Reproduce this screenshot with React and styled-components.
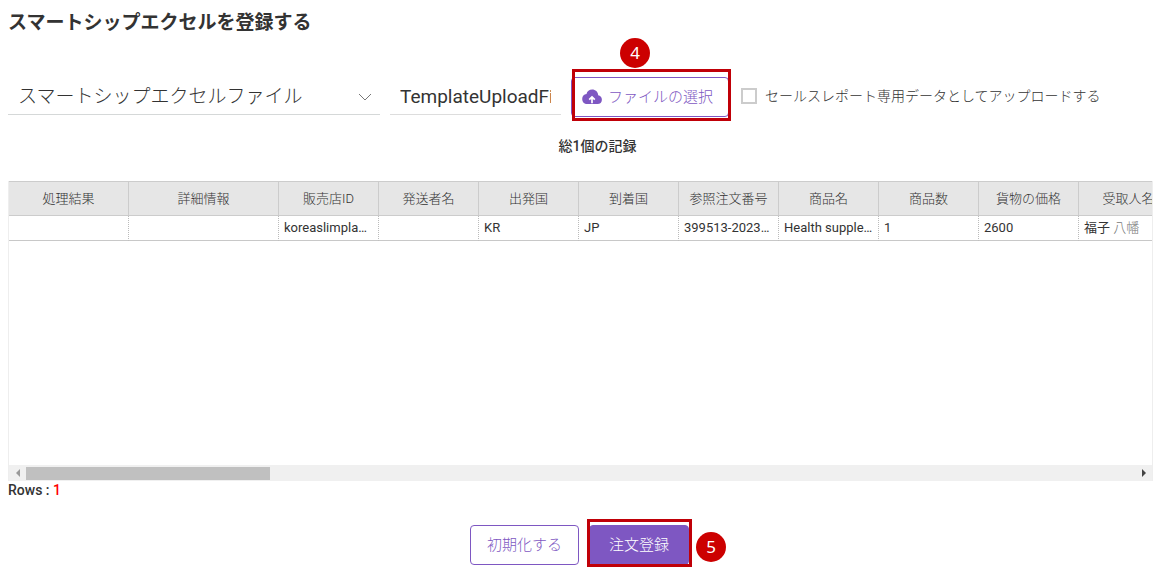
import styled, { createGlobalStyle } from 'styled-components';
import { useState } from 'react';

const columns = [
  { name: '処理結果', width: 120, value: '' },
  { name: '詳細情報', width: 150, value: '' },
  { name: '販売店ID', width: 100, value: 'koreaslimplanet' },
  { name: '発送者名', width: 100, value: '' },
  { name: '出発国', width: 100, value: 'KR' },
  { name: '到着国', width: 100, value: 'JP' },
  { name: '参照注文番号', width: 100, value: '399513-20230412' },
  { name: '商品名', width: 100, value: 'Health supplement' },
  { name: '商品数', width: 100, value: '1' },
  { name: '貨物の価格', width: 100, value: '2600' },
  { name: '受取人名', width: 100, value: '福子 ', muted: '八幡' },
];

const App = () => {
  const [fileName, setFileName] = useState('TemplateUploadFile.xlsx');
  const [reportOnly, setReportOnly] = useState(false);

  return (
    <Page>
      <GlobalStyle />
      <Title>スマートシップエクセルを登録する</Title>
      <Toolbar>
        <SelectBox>
          <TypeSelect aria-label="ファイルの種類">
            <option>スマートシップエクセルファイル</option>
          </TypeSelect>
          <Chevron viewBox="0 0 14 8" aria-hidden="true">
            <path d="M1 1l6 6 6-6" fill="none" stroke="#777" />
          </Chevron>
        </SelectBox>
        <FileNameBox>
          <FileName
            type="text"
            aria-label="ファイル名"
            value={fileName}
            onChange={(e) => setFileName(e.target.value)}
          />
        </FileNameBox>
        <FileStep>
          <FileButton type="button">
            <CloudIcon viewBox="0 0 20 16" aria-hidden="true">
              <path
                d="M16.2 6.3C16.1 2.8 13.4.5 10.2.5 7.3.5 5.1 2.2 4.5 4.9 1.9 5.2.2 7.2.2 9.9c0 3 2.1 5.200 5 5.200h10.300c2.600 0 4.400-1.900 4.400-4.400 0-2.200-1.500-4-3.700-4.400z"
                fill="#7e57c2"
              />
              <path
                d="M10 14.2V8.500M7.200 10.700L10 7.900l2.800 2.800"
                fill="none"
                stroke="#fff"
                strokeWidth="1.7"
              />
            </CloudIcon>
            <ButtonText>ファイルの選択</ButtonText>
          </FileButton>
          <FileFrame />
          <TopBadge>4</TopBadge>
        </FileStep>
        <CheckLabel>
          <CheckBox
            type="checkbox"
            checked={reportOnly}
            onChange={(e) => setReportOnly(e.target.checked)}
          />
          <CheckText>
            セールスレポート専用データとしてアップロードする
          </CheckText>
        </CheckLabel>
      </Toolbar>
      <RecordCount>総1個の記録</RecordCount>
      <Grid>
        <GridBody>
          <Table>
            <colgroup>
              {columns.map((column) => (
                <Col key={column.name} $width={column.width} />
              ))}
            </colgroup>
            <thead>
              <tr>
                {columns.map((column) => (
                  <HeadCell key={column.name}>{column.name}</HeadCell>
                ))}
              </tr>
            </thead>
            <tbody>
              <tr>
                {columns.map((column) => (
                  <Cell key={column.name}>
                    {column.value}
                    {column.muted && <Muted>{column.muted}</Muted>}
                  </Cell>
                ))}
              </tr>
            </tbody>
          </Table>
        </GridBody>
        <ScrollBar>
          <ScrollButton type="button" aria-label="左へ">
            <Arrow viewBox="0 0 4 8">
              <path d="M4 0v8L0 4z" fill="#999" />
            </Arrow>
          </ScrollButton>
          <Track>
            <Thumb />
          </Track>
          <ScrollButton type="button" aria-label="右へ">
            <Arrow viewBox="0 0 4 8">
              <path d="M0 0v8l4-4z" fill="#444" />
            </Arrow>
          </ScrollButton>
        </ScrollBar>
      </Grid>
      <Rows>
        Rows : <RowTotal>1</RowTotal>
      </Rows>
      <Actions>
        <ResetButton type="button">
          <ButtonText>初期化する</ButtonText>
        </ResetButton>
        <SubmitStep>
          <SubmitButton type="button">
            <ButtonText>注文登録</ButtonText>
          </SubmitButton>
          <SubmitFrame />
          <SideBadge>5</SideBadge>
        </SubmitStep>
      </Actions>
    </Page>
  );
};

export default App;

const GlobalStyle = createGlobalStyle`
  * {
    box-sizing: border-box;
  }
  body {
    margin: 0;
    background: #fff;
    color: #333;
    font-family: Roboto, 'Noto Sans CJK JP', sans-serif;
  }
  button, input, select {
    font-family: inherit;
  }
`;

const Page = styled.main`
  padding: 0 6px 5px 8px;
`;

const Title = styled.h1`
  margin: 0;
  padding-top: 2px;
  font-size: 19px;
  font-weight: 700;
  line-height: 42px;
`;

const Toolbar = styled.div`
  display: flex;
  align-items: flex-start;
  gap: 10px;
  padding-top: 33px;
`;

const SelectBox = styled.div`
  position: relative;
  flex: 0 1 372px;
`;

const TypeSelect = styled.select`
  width: 100%;
  height: 38px;
  padding: 2px 30px 0 10px;
  border: none;
  border-bottom: 1px solid #d5d8d8;
  border-radius: 0;
  background: none;
  color: #333;
  font-size: 19px;
  font-weight: 300;
  appearance: none;
`;

const Chevron = styled.svg`
  position: absolute;
  top: 16px;
  right: 8px;
  width: 14px;
  height: 8px;
  pointer-events: none;
`;

const FileNameBox = styled.div`
  flex: 0 1 171px;
  height: 38px;
  padding: 0 10px;
  border-bottom: 1px solid #ddd;
`;

const FileName = styled.input`
  width: 100%;
  height: 37px;
  padding: 2px 0 0;
  border: none;
  outline: none;
  background: none;
  color: #333;
  font-size: 19px;
`;

const FileStep = styled.div`
  position: relative;
`;

const Button = styled.button`
  height: 40px;
  border: 1px solid #7e57c2;
  border-radius: 4px;
  background: #fff;
  color: #7e57c2;
  font-size: 15px;
  font-weight: 300;
  white-space: nowrap;
  cursor: pointer;
`;

const ButtonText = styled.span`
  display: block;
  padding-bottom: 3px;
`;

const FileButton = styled(Button)`
  display: flex;
  align-items: center;
  gap: 6px;
  padding: 0 15px 0 10px;
`;

const CloudIcon = styled.svg`
  width: 20px;
  height: 16px;
`;

const Frame = styled.span`
  position: absolute;
  border: 3px solid #c00008;
  pointer-events: none;
`;

const FileFrame = styled(Frame)`
  inset: -8px -2px -4px 1px;
`;

const Badge = styled.span`
  position: absolute;
  width: 30px;
  height: 30px;
  border-radius: 50%;
  background: #c00;
  color: #fff;
  font-family: 'Noto Sans', sans-serif;
  font-size: 17px;
  line-height: 30px;
  text-align: center;
`;

const TopBadge = styled(Badge)`
  top: -39px;
  left: 49px;
`;

const CheckLabel = styled.label`
  display: flex;
  align-items: center;
  gap: 8px;
  height: 38px;
  padding-left: 2px;
  font-size: 14px;
  font-weight: 300;
  white-space: nowrap;
`;

const CheckText = styled.span`
  padding-bottom: 2px;
`;

const CheckBox = styled.input`
  width: 16px;
  height: 16px;
  margin: 0;
  border: 2px solid #ccc;
  background: #fff;
  appearance: none;
  &:checked {
    background: #7e57c2;
  }
`;

const RecordCount = styled.p`
  margin: 18px 0 0;
  padding-left: 34px;
  font-size: 14px;
  font-weight: 500;
  line-height: 22px;
  text-align: center;
`;

const Grid = styled.section`
  display: flex;
  flex-direction: column;
  height: 300px;
  margin-top: 24px;
  border: 1px solid #eee;
  border-top: none;
  border-bottom: none;
`;

const GridBody = styled.div`
  flex: 1;
  overflow: hidden;
`;

const Table = styled.table`
  width: 1170px;
  border-collapse: separate;
  border-spacing: 0;
  table-layout: fixed;
`;

const Col = styled.col`
  width: ${(props) => props.$width}px;
`;

const HeadCell = styled.th`
  height: 35px;
  padding: 0 0 2px;
  border-top: 1px solid #ccc;
  border-right: 1px solid #ccc;
  border-bottom: 1px solid #ccc;
  background: #e6e6e6;
  font-size: 13px;
  font-weight: 300;
`;

const Cell = styled.td`
  height: 25px;
  padding: 0 5px;
  overflow: hidden;
  border-right: 1px dotted #bbb;
  border-bottom: 1px solid #c8c8c8;
  font-size: 13px;
  line-height: 24px;
  text-overflow: ellipsis;
  white-space: nowrap;
`;

const Muted = styled.span`
  color: #777;
  font-weight: 300;
`;

const ScrollBar = styled.div`
  display: flex;
  height: 16px;
  background: #f0f0f0;
`;

const ScrollButton = styled.button`
  display: flex;
  align-items: center;
  justify-content: center;
  width: 17px;
  height: 16px;
  padding: 0;
  border: none;
  background: none;
`;

const Arrow = styled.svg`
  width: 4px;
  height: 8px;
`;

const Track = styled.div`
  flex: 1;
  padding-top: 2px;
`;

const Thumb = styled.div`
  width: 22%;
  height: 13px;
  background: #c0c0c0;
`;

const Rows = styled.p`
  margin: 0;
  font-size: 14px;
  font-weight: 500;
  line-height: 19px;
`;

const RowTotal = styled.span`
  color: #f00;
`;

const Actions = styled.div`
  display: flex;
  justify-content: center;
  gap: 10px;
  padding: 25px 2px 0 0;
`;

const ResetButton = styled(Button)`
  padding: 0 16px;
`;

const SubmitStep = styled.div`
  position: relative;
`;

const SubmitButton = styled(Button)`
  padding: 0 19px;
  background: #7e57c2;
  color: #fff;
`;

const SubmitFrame = styled(Frame)`
  inset: -6px -3px -2px -2px;
`;

const SideBadge = styled(Badge)`
  top: 7px;
  left: 107px;
`;
